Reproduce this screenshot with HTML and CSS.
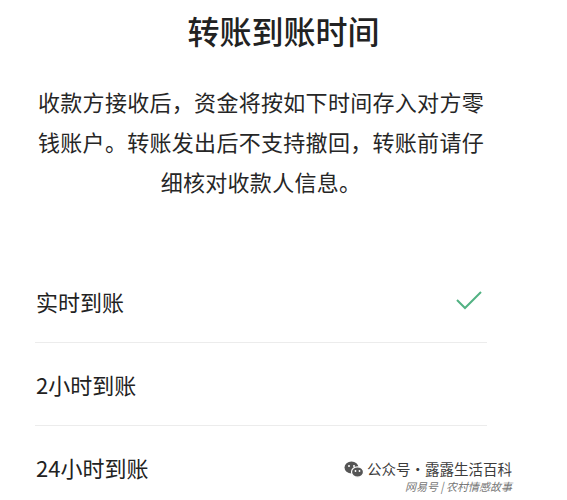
FILE: index.html
```html
<!DOCTYPE html>
<html lang="zh-CN">
<head>
  <meta charset="UTF-8">
  <title>转账到账时间</title>
  <link rel="stylesheet" href="styles.css">
</head>
<body>

  <h1 class="title">转账到账时间</h1>

  <p class="desc">收款方接收后，资金将按如下时间存入对方零<br>钱账户。转账发出后不支持撤回，转账前请仔<br>细核对收款人信息。</p>

  <ul class="options">
    <li class="option">
      <span>实时到账</span>
      <svg class="check" width="26" height="20" viewBox="0 0 26 20">
        <polyline points="1,9 9,17 25,1" fill="none" stroke="#52b283" stroke-width="2"/>
      </svg>
    </li>
    <li class="option"><span>2小时到账</span></li>
    <li class="option last"><span>24小时到账</span></li>
  </ul>

  <div class="mark">
    <div class="mark-main">
      <svg class="wx" width="20" height="17" viewBox="0 0 20 17">
        <ellipse cx="7.5" cy="6.5" rx="7" ry="6" fill="#555"/>
        <ellipse cx="13.5" cy="11" rx="6" ry="5.2" fill="#555" stroke="#fff" stroke-width="1.2"/>
        <circle cx="5" cy="5" r="1" fill="#fff"/>
        <circle cx="10" cy="5" r="1" fill="#fff"/>
        <circle cx="11.5" cy="10" r="0.9" fill="#fff"/>
        <circle cx="15.5" cy="10" r="0.9" fill="#fff"/>
      </svg>
      <span>公众号·露露生活百科</span>
    </div>
    <div class="mark-sub">网易号 | 农村情感故事</div>
  </div>

</body>
</html>
```

FILE: styles.css
```css
body {
  margin: 0;
  background: #fff;
  color: #222;
  font-family: "Noto Sans CJK SC", "Noto Sans", sans-serif;
  position: relative;
  height: 500px;
  overflow: hidden;
}
.title {
  margin: 10px 0 0;
  font-size: 32px;
  line-height: 40px;
  font-weight: 500;
  text-align: center;
}
.desc {
  margin: 31px 0 0 37px;
  width: 448px;
  font-size: 22px;
  line-height: 40px;
  letter-spacing: 0.3px;
  text-align: center;
  color: #262626;
}
.options {
  list-style: none;
  margin: 59px 0 0 35px;
  padding: 0;
  width: 452px;
}
.option {
  height: 82px;
  display: flex;
  align-items: center;
  justify-content: space-between;
  border-bottom: 1px solid #ececec;
  font-size: 22px;
  padding-left: 1px;
}
.option.last {
  border-bottom: none;
}
.check {
  margin-right: 5px;
}
.mark {
  position: absolute;
  left: 344px;
  top: 459px;
}
.mark-main {
  display: flex;
  align-items: center;
  gap: 3px;
  font-size: 14.5px;
  line-height: 20px;
  color: #3c3c3c;
}
.mark-sub {
  margin: 0 0 0 61px;
  font-size: 11px;
  line-height: 14px;
  font-style: italic;
  color: #777;
  font-family: "Noto Sans CJK SC", serif;
}
```
